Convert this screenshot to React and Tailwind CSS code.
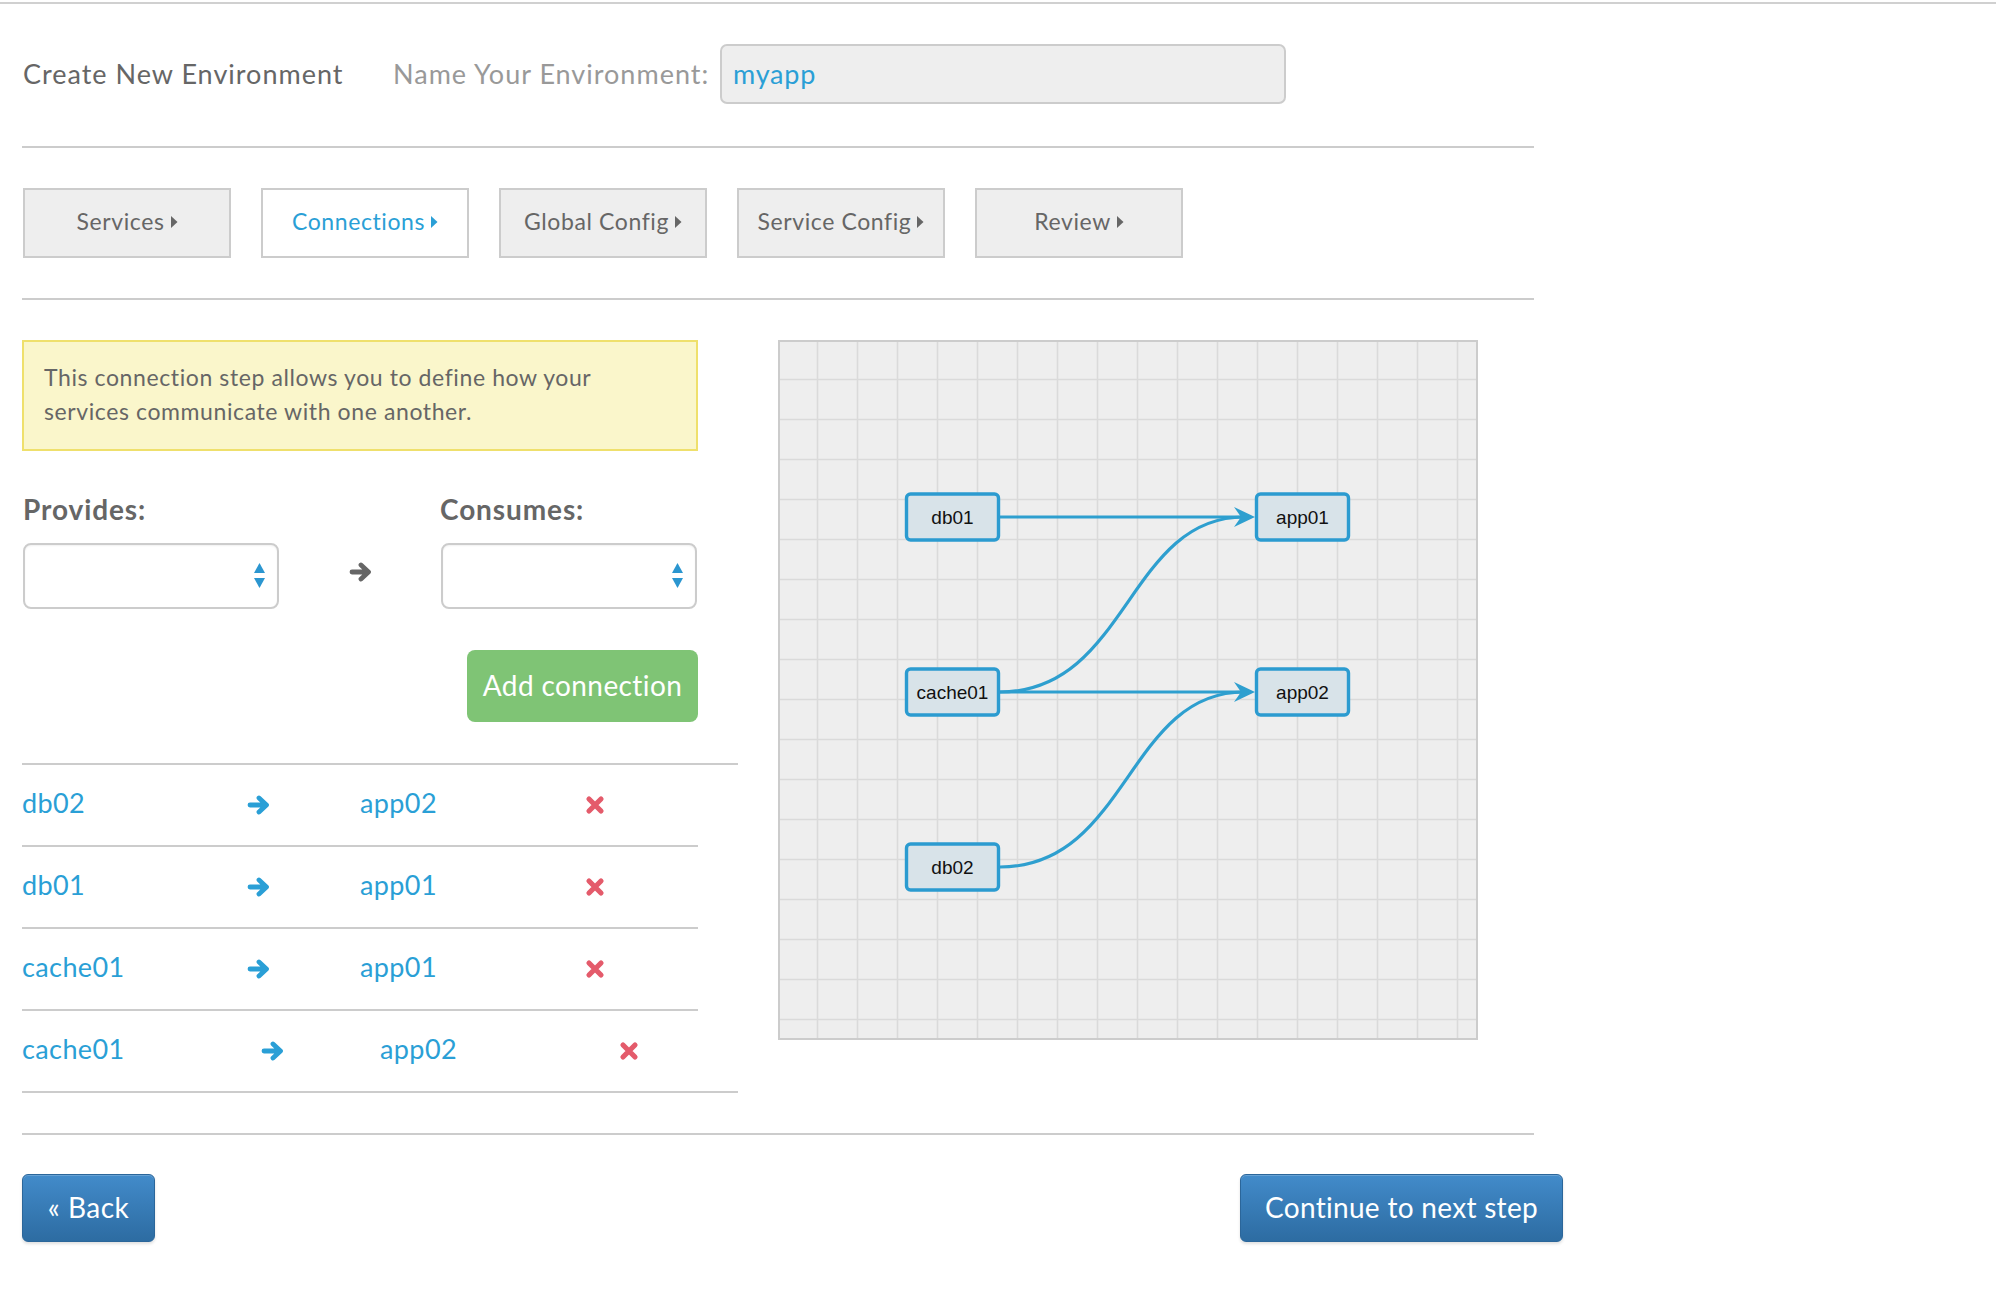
import React from "react";

const BLUE = "#2a9fd6";

function Caret({ color }) {
  return (
    <svg width="7" height="12" viewBox="0 0 7 12" className="ml-[6px] mt-[1px]">
      <path d="M0 0 L6.5 6 L0 12 Z" fill={color} />
    </svg>
  );
}

function Tab({ label, active }) {
  return (
    <div
      className={
        active
          ? "w-[208px] h-[70px] border-2 border-[#ccc] bg-white flex items-center justify-center pb-[3px] text-[23px] tracking-[0.6px] text-[#2a9fd6]"
          : "w-[208px] h-[70px] border-2 border-[#ccc] bg-[#eee] flex items-center justify-center pb-[3px] text-[23px] tracking-[0.6px] text-[#666]"
      }
    >
      <span>{label}</span>
      <Caret color={active ? BLUE : "#666"} />
    </div>
  );
}

function SelectBox() {
  return (
    <div className="w-[256px] h-[66px] rounded-[8px] border-2 border-[#ccc] bg-white flex items-center justify-end pr-[12px] shadow-[inset_0_1px_2px_rgba(0,0,0,0.06)]">
      <svg width="11" height="26" viewBox="0 0 11 26">
        <path d="M5.5 0 L11 10 L0 10 Z" fill="#2b96d0" />
        <path d="M0 15 L11 15 L5.5 25 Z" fill="#2b96d0" />
      </svg>
    </div>
  );
}

function ArrowIcon({ color }) {
  return (
    <svg width="24" height="20" viewBox="0 0 24 20">
      <path
        d="M3 10 H19 M12 3 L19.5 10 L12 17"
        fill="none"
        stroke={color}
        strokeWidth="4.8"
        strokeLinecap="round"
        strokeLinejoin="round"
      />
    </svg>
  );
}

function XIcon() {
  return (
    <svg width="20" height="20" viewBox="0 0 20 20">
      <path
        d="M4 4 L16 16 M16 4 L4 16"
        fill="none"
        stroke="#e45b6b"
        strokeWidth="5.2"
        strokeLinecap="round"
      />
    </svg>
  );
}

function Row({ from, to, wide }) {
  return (
    <div
      className={
        (wide ? "w-[716px]" : "w-[676px]") +
        " h-[82px] border-b-2 border-[#ccc] grid grid-cols-[2fr_1fr_2fr_1fr] items-center pb-[3px] text-[27px] tracking-[0.4px] text-[#2a9fd6]"
      }
    >
      <span>{from}</span>
      <span className="flex pt-[3px]">
        <ArrowIcon color={BLUE} />
      </span>
      <span>{to}</span>
      <span className="flex pt-[3px]">
        <XIcon />
      </span>
    </div>
  );
}

function Diagram() {
  const lines = [];
  for (let k = 0; k < 17; k++) lines.push(39.5 + 40 * k);
  const nodeStroke = "#2b9bd0";
  const edge = "#2e9fcf";
  const nodes = [
    { label: "db01", x: 129, cy: 177 },
    { label: "cache01", x: 129, cy: 352 },
    { label: "db02", x: 129, cy: 527 },
    { label: "app01", x: 479, cy: 177 },
    { label: "app02", x: 479, cy: 352 },
  ];
  const head = (tx, ty) =>
    `M${tx} ${ty} L${tx - 21} ${ty - 10} L${tx - 14} ${ty} L${tx - 21} ${ty + 10} Z`;
  return (
    <div className="w-[700px] h-[700px] shrink-0">
      <svg width="700" height="700" viewBox="0 0 700 700">
        <rect x="0" y="0" width="700" height="700" fill="#eeeeee" />
        {lines.map((p) => (
          <line key={"v" + p} x1={p} y1="0" x2={p} y2="700" stroke="#dadada" strokeWidth="1.6" />
        ))}
        {lines.map((p) => (
          <line key={"h" + p} x1="0" y1={p} x2="700" y2={p} stroke="#dadada" strokeWidth="1.6" />
        ))}
        <rect x="1" y="1" width="698" height="698" fill="none" stroke="#cccccc" strokeWidth="2" />
        <path d="M222 177 L466 177" stroke={edge} strokeWidth="3.2" fill="none" />
        <path d="M222 352 L466 352" stroke={edge} strokeWidth="3.2" fill="none" />
        <path d="M222 352 C349.5 352 349.5 177 466 177" stroke={edge} strokeWidth="3.2" fill="none" />
        <path d="M222 527 C349.5 527 349.5 352 466 352" stroke={edge} strokeWidth="3.2" fill="none" />
        <path d={head(477, 177)} fill={edge} />
        <path d={head(477, 352)} fill={edge} />
        {nodes.map((n) => (
          <g key={n.label}>
            <rect
              x={n.x - 0.5}
              y={n.cy - 23}
              width="92"
              height="46"
              rx="4"
              fill="#d8e3e9"
              stroke={nodeStroke}
              strokeWidth="3.4"
            />
            <text
              x={n.x + 45.5}
              y={n.cy + 7}
              textAnchor="middle"
              fontFamily="'Liberation Sans', Arial, sans-serif"
              fontSize="19"
              fill="#111"
            >
              {n.label}
            </text>
          </g>
        ))}
      </svg>
    </div>
  );
}

export default function App() {
  return (
    <div className="min-h-screen w-full bg-white font-['Lato','Noto_Sans',sans-serif]">
      <div className="mt-[2px] h-[2px] w-full bg-[#d0d0d0]" />
      <div className="ml-[22px] w-[1512px]">
        <div className="h-[142px] flex items-center pb-[2px]">
          <span className="w-[371px] pl-[1px] text-[27px] tracking-[1px] text-[#666]">Create New Environment</span>
          <span className="w-[327px] text-[27px] tracking-[1px] text-[#999]">Name Your Environment:</span>
          <div className="w-[566px] h-[60px] rounded-[7px] border-2 border-[#ccc] bg-[#eee] flex items-center pl-[11px] text-[27px] tracking-[0.8px] text-[#2a9fd6]">
            myapp
          </div>
        </div>
        <div className="h-[2px] bg-[#ccc]" />

        <div className="mt-[40px] pl-[1px] flex gap-[30px]">
          <Tab label="Services" />
          <Tab label="Connections" active />
          <Tab label="Global Config" />
          <Tab label="Service Config" />
          <Tab label="Review" />
        </div>
        <div className="mt-[40px] h-[2px] bg-[#ccc]" />

        <div className="mt-[40px] flex gap-[40px]">
          <div className="w-[716px]">
            <div className="w-[676px] h-[111px] border-2 border-[#efe06c] bg-[#faf6cb] px-[20px] pt-[18px] text-[23px] leading-[34px] tracking-[0.6px] text-[#666]">
              This connection step allows you to define how your
              <br />
              services communicate with one another.
            </div>

            <div className="mt-[42px] w-[676px] flex text-[28px] leading-[32px] tracking-[0.9px] font-bold text-[#666]">
              <span className="w-[418px] pl-[1px]">Provides:</span>
              <span>Consumes:</span>
            </div>

            <div className="mt-[18px] w-[676px] flex items-center pl-[1px]">
              <SelectBox />
              <div className="w-[162px] flex justify-center pl-[2px] pb-[8px]">
                <ArrowIcon color="#666" />
              </div>
              <SelectBox />
            </div>

            <div className="mt-[41px] w-[676px] flex justify-end">
              <div className="w-[231px] h-[72px] rounded-[8px] bg-[#7fc475] flex items-center justify-center pb-[2px] text-[28px] tracking-[0.4px] text-white">
                Add connection
              </div>
            </div>

            <div className="mt-[41px] w-[716px] border-t-2 border-[#ccc]">
              <Row from="db02" to="app02" />
              <Row from="db01" to="app01" />
              <Row from="cache01" to="app01" />
              <Row from="cache01" to="app02" wide />
            </div>
          </div>

          <Diagram />
        </div>

        <div className="mt-[40px] h-[2px] bg-[#ccc]" />

        <div className="mt-[39px] mb-[60px] w-[1541px] flex justify-between">
          <div className="w-[133px] h-[68px] rounded-[6px] border border-[#2b669a] bg-linear-to-b from-[#428bca] to-[#2d6ca2] shadow-[inset_0_1px_0_rgba(255,255,255,0.2),0_2px_3px_rgba(0,0,0,0.12)] flex items-center justify-center pb-[2px] text-[28px] tracking-[0.5px] text-white">
            « Back
          </div>
          <div className="w-[323px] h-[68px] rounded-[6px] border border-[#2b669a] bg-linear-to-b from-[#428bca] to-[#2d6ca2] shadow-[inset_0_1px_0_rgba(255,255,255,0.2),0_2px_3px_rgba(0,0,0,0.12)] flex items-center justify-center pb-[2px] text-[28px] tracking-[0.3px] text-white">
            Continue to next step
          </div>
        </div>
      </div>
    </div>
  );
}
